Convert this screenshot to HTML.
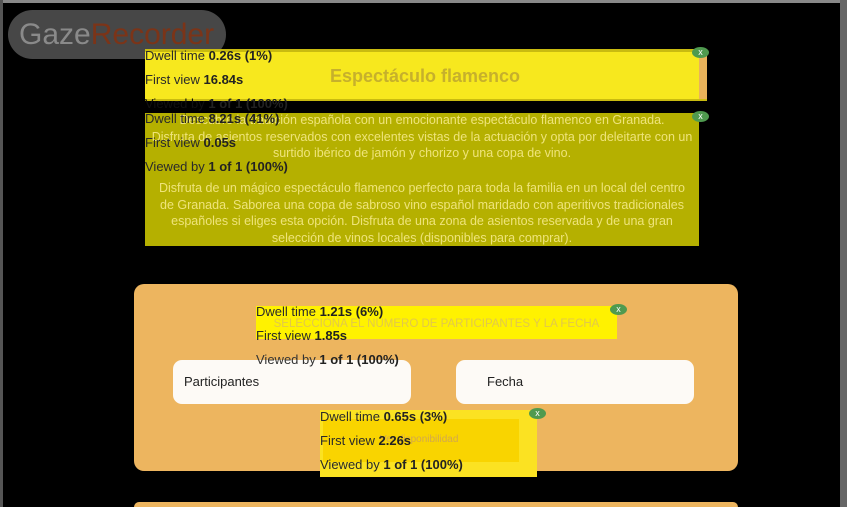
<!DOCTYPE html>
<html><head><meta charset="utf-8"><style>
*{margin:0;padding:0;box-sizing:border-box}
html,body{width:847px;height:507px;overflow:hidden}
body{background:#000;position:relative;font-family:"Liberation Sans",sans-serif}
.a{position:absolute}
.st{position:absolute;font-size:13px;color:#2a2a2a;line-height:24px;white-space:nowrap}
.st b{color:#222}
.x{position:absolute;width:17px;height:11px;border-radius:50%;background:#4f9a4f;color:#fff;font-size:9px;line-height:11px;text-align:center}
.c{font-family:"Liberation Sans",sans-serif;text-align:center;color:#efe47a;font-size:12.5px;line-height:16.5px}
</style></head><body>
<div class="a" style="left:0;top:0;width:847px;height:3px;background:#888"></div>
<div class="a" style="left:0;top:0;width:3px;height:507px;background:#555"></div>
<div class="a" style="left:840px;top:0;width:7px;height:507px;background:#666"></div>
<div class="a" style="left:8px;top:10px;width:218px;height:49px;border-radius:25px;background:#474747;font-size:30px;line-height:49px;padding-left:11px;white-space:nowrap"><span style="color:#8a8a8a">Gaze</span><span style="color:#7b3418">Recorder</span></div>

<div class="a" style="left:145px;top:49px;width:562px;height:52px;background:#f7e81e;border-top:3px solid #c9bb10;border-bottom:2px solid #c9bb10"></div>
<div class="a" style="left:699px;top:52px;width:8px;height:47px;background:#e9b25a"></div>
<div class="a" style="left:145px;top:66px;width:560px;text-align:center;color:#c6b02c;font-size:18px;font-weight:bold">Espectáculo flamenco</div>
<div class="x" style="left:692px;top:47px">x</div>
<div class="st" style="left:145px;top:44px">Dwell time <b>0.26s (1%)</b></div>
<div class="st" style="left:145px;top:68px">First view <b>16.84s</b></div>
<div class="st" style="left:145px;top:92px;color:#111">Viewed by <b>1 of 1 (100%)</b></div>

<div class="a" style="left:145px;top:113px;width:554px;height:133px;background:#b5b000"></div>
<div class="a c" style="left:145px;top:112px;width:554px">Descubre la tradición española con un emocionante espectáculo flamenco en Granada.<br>Disfruta de asientos reservados con excelentes vistas de la actuación y opta por deleitarte con un<br>surtido ibérico de jamón y chorizo y una copa de vino.</div>
<div class="a c" style="left:145px;top:180px;width:554px">Disfruta de un mágico espectáculo flamenco perfecto para toda la familia en un local del centro<br>de Granada. Saborea una copa de sabroso vino español maridado con aperitivos tradicionales<br>españoles si eliges esta opción. Disfruta de una zona de asientos reservada y de una gran<br>selección de vinos locales (disponibles para comprar).</div>
<div class="x" style="left:692px;top:111px">x</div>
<div class="st" style="left:145px;top:107px">Dwell time <b>8.21s (41%)</b></div>
<div class="st" style="left:145px;top:131px">First view <b>0.05s</b></div>
<div class="st" style="left:145px;top:155px">Viewed by <b>1 of 1 (100%)</b></div>

<div class="a" style="left:134px;top:284px;width:604px;height:187px;background:#edb55f;border-radius:10px"></div>
<div class="a" style="left:134px;top:502px;width:604px;height:5px;background:#edb55f;border-radius:10px 10px 0 0"></div>
<div class="a" style="left:256px;top:306px;width:361px;height:33px;background:#fff200"></div>
<div class="a" style="left:256px;top:318px;width:361px;text-align:center;color:#e2c84a;font-size:11.5px;white-space:nowrap">SELECCIONA EL NÚMERO DE PARTICIPANTES Y LA FECHA</div>
<div class="x" style="left:610px;top:304px">x</div>
<div class="a" style="left:173px;top:360px;width:238px;height:44px;background:#fdfaf6;border-radius:9px;font-size:13px;line-height:44px;padding-left:11px;color:#222">Participantes</div>
<div class="a" style="left:456px;top:360px;width:238px;height:44px;background:#fdfaf6;border-radius:9px;font-size:13px;line-height:44px;padding-left:31px;color:#222">Fecha</div>
<div class="st" style="left:256px;top:300px">Dwell time <b>1.21s (6%)</b></div>
<div class="st" style="left:256px;top:324px">First view <b>1.85s</b></div>
<div class="st" style="left:256px;top:348px;color:#333">Viewed by <b>1 of 1 (100%)</b></div>

<div class="a" style="left:320px;top:410px;width:217px;height:67px;background:#fbe222"></div>
<div class="a" style="left:323px;top:419px;width:196px;height:43px;background:#f9d400"></div>
<div class="a" style="left:380px;top:434px;font-size:10px;color:#d2a84c">Ver disponibilidad</div>
<div class="x" style="left:529px;top:408px">x</div>
<div class="st" style="left:320px;top:405px">Dwell time <b>0.65s (3%)</b></div>
<div class="st" style="left:320px;top:429px">First view <b>2.26s</b></div>
<div class="st" style="left:320px;top:453px">Viewed by <b>1 of 1 (100%)</b></div>
</body></html>
